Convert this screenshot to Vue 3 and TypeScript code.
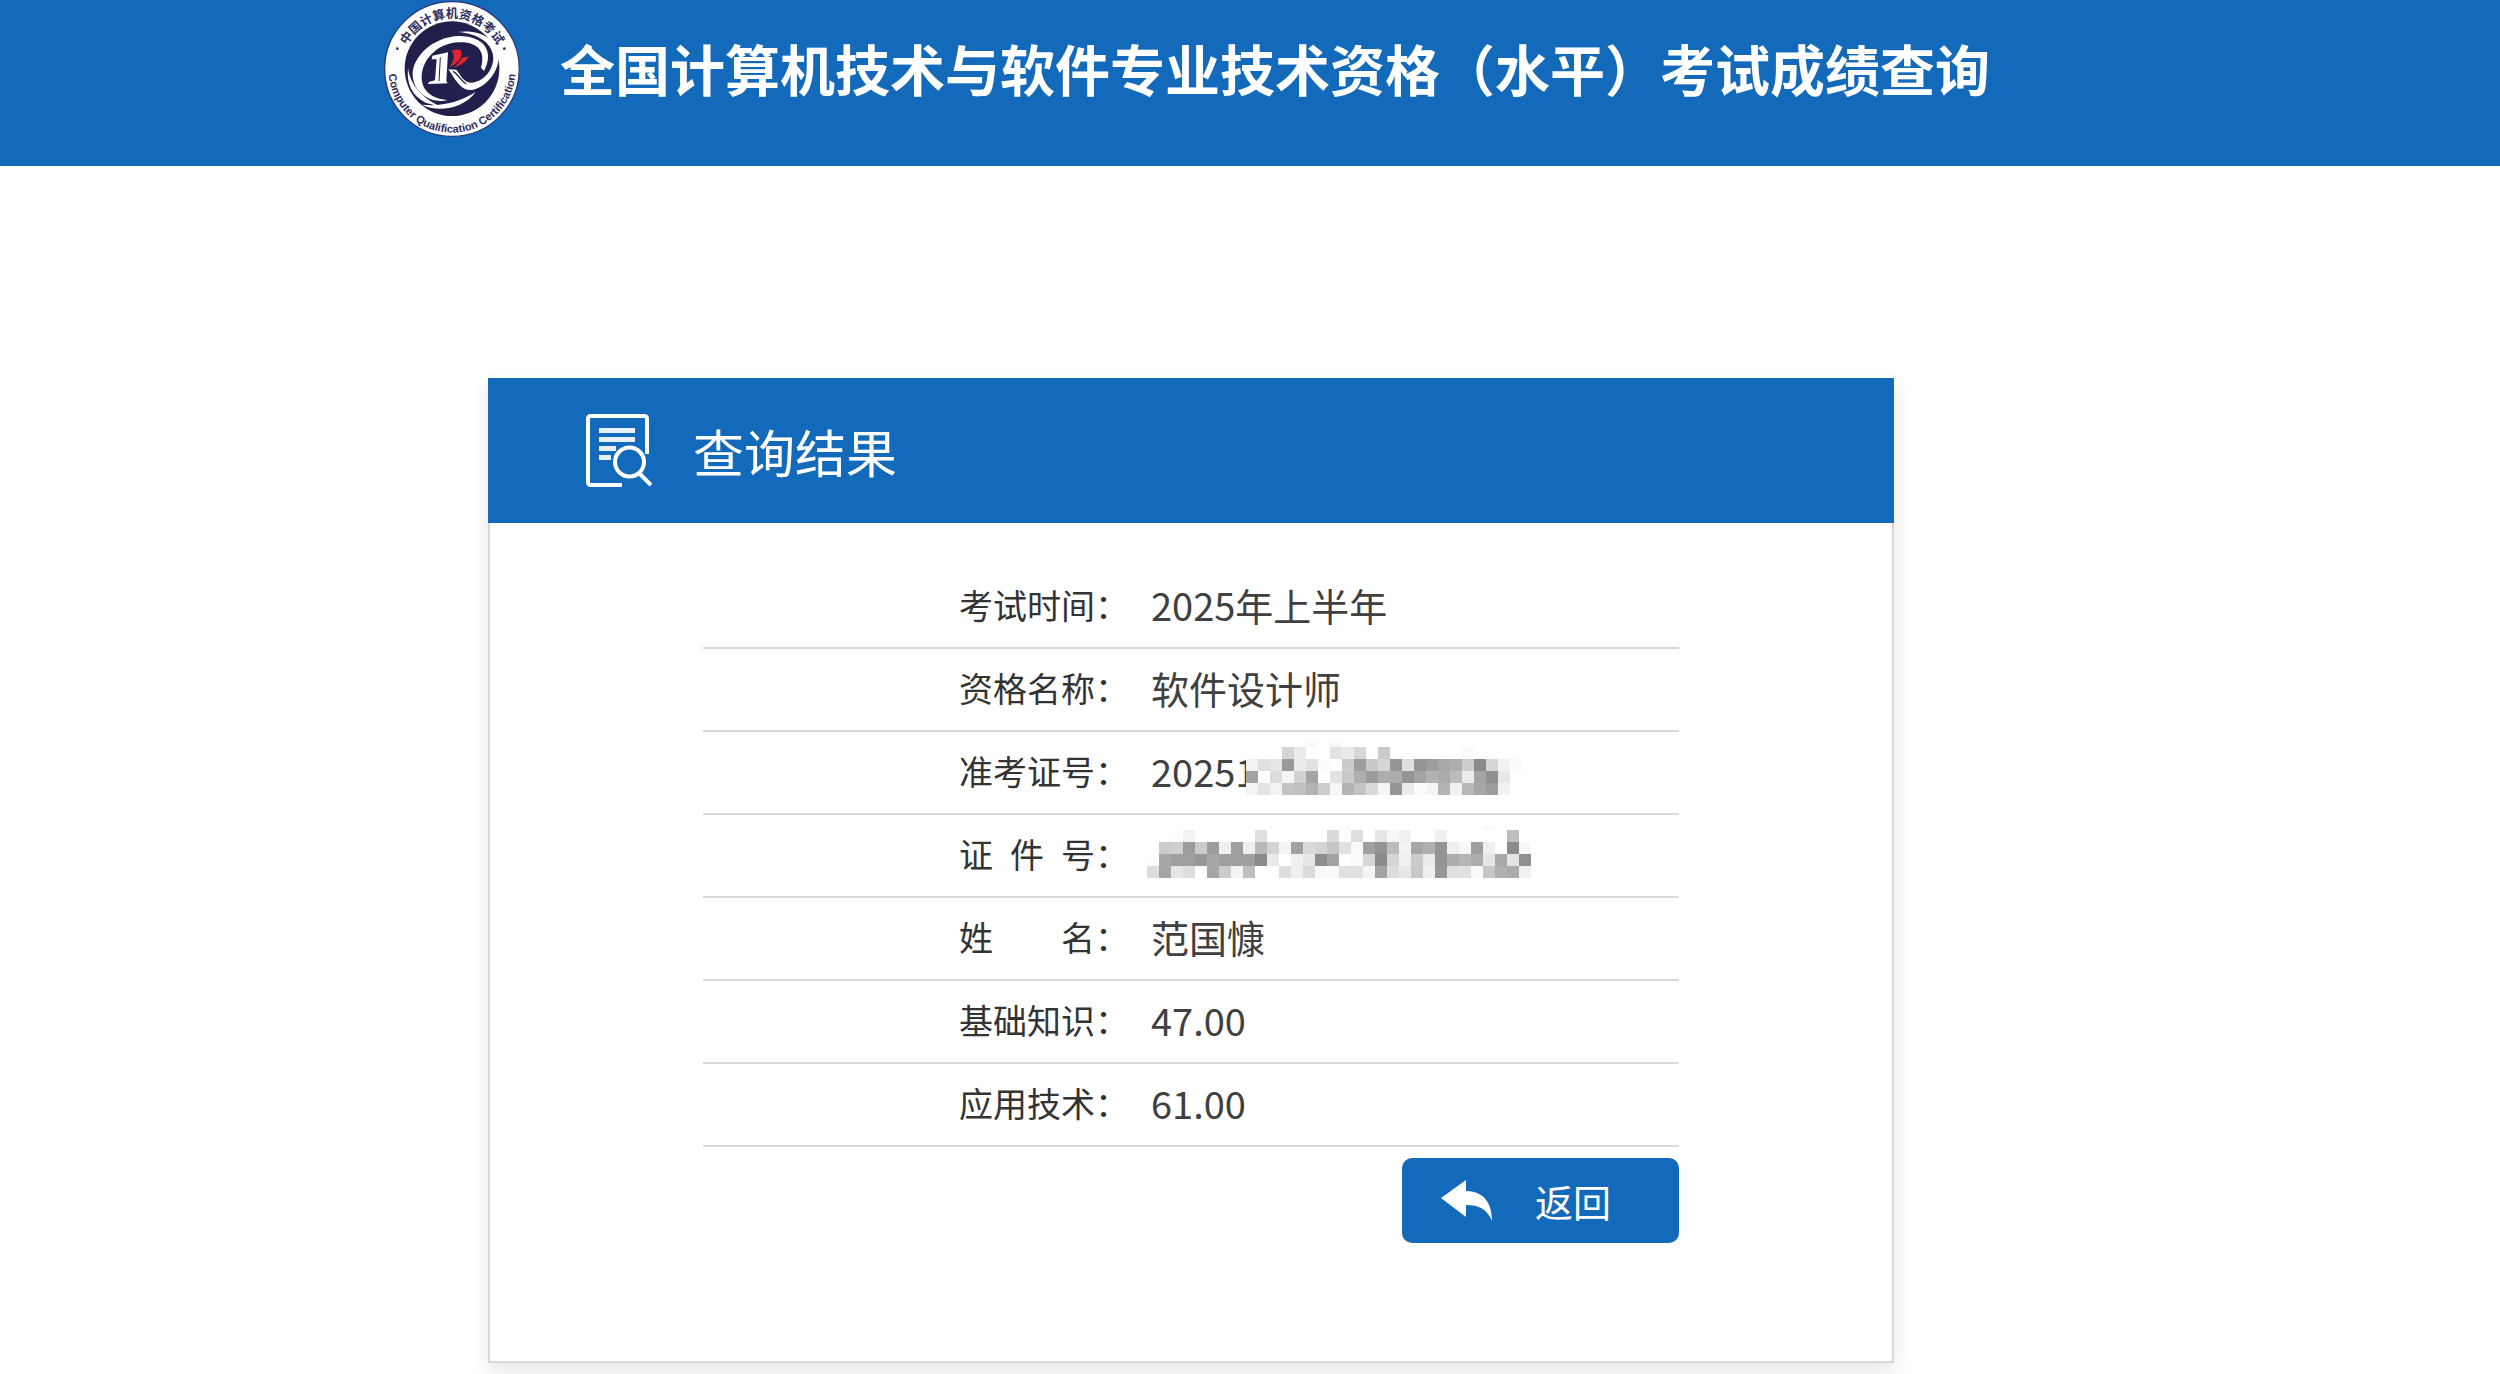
<script setup lang="ts">
interface Mosaic {
  cap: string
  rows: string[]
}

interface ResultRow {
  label: string
  value: string
  mosaic?: Mosaic
}

interface Cell {
  x: number
  y: number
  h: number
  fill: string
}

const CELL = 12
const CAP = 4

// Each row is a run of two-digit grey levels; ".." leaves a cell empty.
const admissionMosaic: Mosaic = {
  cap: '.. .. .. .. .. f7 .. f7',
  rows: [
    '.. .. .. d5 ea .. .. e2 ea d8 .. cb .. .. .. .. .. .. fa .. .. .. ..',
    'f2 e0 e6 99 ea e2 fc ff cb 9d c9 d5 95 e0 95 9e a8 ae cd 8a d5 f2 fa',
    'a3 ff dc f5 d2 a4 ff e2 c8 ae 9b ad ac 94 a4 b3 ac bb eb a4 90 e8 ff',
    'f4 e4 f2 c4 c0 b3 cd f7 b3 c4 da f5 96 eb fc f5 b3 f2 b8 a6 9c f2 ..',
  ],
}

const identityMosaic: Mosaic = {
  cap: '.. .. .. .. .. .. .. .. .. .. .. .. .. .. .. .. fa .. .. .. .. .. .. .. .. .. .. .. fa',
  rows: [
    '.. .. fd f2 .. .. .. .. .. e0 .. .. .. .. .. da fe de .. e6 f8 f0 .. .. f0 .. .. .. .. .. be ..',
    'ff cb d0 9c cb 9c f0 9e ef b9 d4 f5 a1 da d4 c6 e0 fa a0 93 bc f3 a6 b0 94 ef f7 9f ef ff 8c f8',
    'fd a7 9f 9f 98 a6 9f 9f 9f 8a ea ff f0 e7 8e a3 fd fb d7 8a d5 f1 cb ea 94 ac b6 ac e6 a8 e4 91',
    'de a6 e6 de fe a6 cb f4 bf ff fe dd f0 db f9 fa e1 e2 f5 a3 dd e7 c8 f0 96 e0 e0 fa c6 b0 ab f1',
  ],
}

const rows: ResultRow[] = [
  { label: '考试时间', value: '2025年上半年' },
  { label: '资格名称', value: '软件设计师' },
  { label: '准考证号', value: '20251', mosaic: admissionMosaic },
  { label: '证件号', value: '', mosaic: identityMosaic },
  { label: '姓名', value: '范国慷' },
  { label: '基础知识', value: '47.00' },
  { label: '应用技术', value: '61.00' },
]

function toCells(line: string, y: number, h: number): Cell[] {
  return line
    .split(' ')
    .map((level, i) => ({ x: i * CELL, y, h, fill: `#${level.repeat(3)}`, empty: level === '..' }))
    .filter((cell) => !cell.empty)
}

function cellsOf(mosaic: Mosaic): Cell[] {
  return [
    ...toCells(mosaic.cap, 0, CAP),
    ...mosaic.rows.flatMap((line, i) => toCells(line, CAP + i * CELL, CELL)),
  ]
}

function widthOf(mosaic: Mosaic): number {
  return mosaic.rows[0].split(' ').length * CELL
}
</script>

<template>
  <div class="page">
    <header class="banner">
      <div class="banner-inner">
        <svg class="logo" viewBox="45 5 408 408" aria-hidden="true">
          <defs>
            <path id="arc-top" d="M96 209 A153 153 0 0 1 402 209" />
            <path id="arc-bottom" d="M62 170 A191 191 0 1 0 436 170" />
          </defs>
          <circle cx="249" cy="209" r="202" fill="#fff" stroke="#2a3a78" stroke-width="4" />
          <circle cx="249" cy="208" r="142" fill="#211f4b" />
          <g fill="#fff">
            <path d="M345 215C375 160 350 110 270 110C190 112 128 175 131 230C136 285 190 314 237 302C190 298 157 275 158 232C160 180 205 131 270 129C330 127 350 160 336 205Z" />
            <path d="M266 98C330 88 390 120 389 175C388 225 340 273 300 272C272 270 256 236 238 210L262 211C276 228 282 248 306 250C342 248 372 215 373 175C372 135 330 102 266 98Z" />
            <path d="M158 316C205 340 282 330 320 278C270 310 215 322 158 316Z" />
            <path d="M117 206C112 250 128 290 170 310L220 324C165 300 125 262 117 206Z" />
            <path d="M190 169L237 159L232 246L236 252L176 254L181 247L198 243L203 180L188 180Z" />
          </g>
          <path d="M214 174L210 246" stroke="#211f4b" stroke-width="3" />
          <path d="M252 216C268 224 276 246 292 254" stroke="#211f4b" stroke-width="4" fill="none" />
          <g fill="#e0252f">
            <path d="M247 154Q272 146 278 158Q279 187 242 203Q264 172 247 154Z" />
            <path d="M277 176L299 171Q287 197 254 204Q272 191 277 176Z" />
          </g>
          <g fill="#2f2d5c">
            <circle cx="85" cy="148" r="4" />
            <circle cx="406" cy="148" r="4" />
            <text class="seal-cn" text-anchor="middle">
              <textPath href="#arc-top" startOffset="50%">中国计算机资格考试</textPath>
            </text>
            <text class="seal-en" text-anchor="middle">
              <textPath href="#arc-bottom" startOffset="50%">Computer Qualification Certification</textPath>
            </text>
          </g>
        </svg>
        <h1 class="title">全国计算机技术与软件专业技术资格（水平）考试成绩查询</h1>
      </div>
    </header>

    <main class="content">
      <section class="card">
        <div class="card-head">
          <svg class="head-icon" viewBox="0 0 66 73" fill="none" stroke="#fff" stroke-width="4" aria-hidden="true">
            <path d="M61 40V5Q61 2 58 2H5Q2 2 2 5V68Q2 71 5 71H36" />
            <path d="M13 16.500H49M13 25.500H49M13 34.500H30M13 43.500H25" stroke-width="5" stroke-opacity="0.900" />
            <circle cx="43.500" cy="48" r="14.500" />
            <path d="M53 59L65 71" />
          </svg>
          <h2 class="card-title">查询结果</h2>
        </div>

        <div class="card-body">
          <table class="result">
            <tbody>
              <tr v-for="row in rows" :key="row.label">
                <th scope="row"><span class="label">{{ row.label }}</span>：</th>
                <td>
                  <div class="value">
                    <span v-if="row.value">{{ row.value }}</span>
                    <svg
                      v-if="row.mosaic"
                      class="mosaic"
                      :class="{ overlap: row.value }"
                      :width="widthOf(row.mosaic)"
                      height="52"
                      shape-rendering="crispEdges"
                      aria-hidden="true"
                    >
                      <rect
                        v-for="(cell, i) in cellsOf(row.mosaic)"
                        :key="i"
                        :x="cell.x"
                        :y="cell.y"
                        width="12"
                        :height="cell.h"
                        :fill="cell.fill"
                      />
                    </svg>
                  </div>
                </td>
              </tr>
            </tbody>
          </table>

          <div class="actions">
            <button type="button" class="back">
              <svg class="back-icon" viewBox="0 0 52 41" aria-hidden="true">
                <path d="M0 18L25 0V11C42 11 51 22 51 41C46 29 38 25 25 25V37Z" fill="#fff" />
              </svg>
              <span>返回</span>
            </button>
          </div>
        </div>
      </section>
    </main>
  </div>
</template>

<style>
body {
  margin: 0;
  background: #fff;
}
</style>

<style scoped>
.page {
  font-family: "Noto Sans CJK SC", "Noto Sans", sans-serif;
  color: #333;
}

.banner {
  box-sizing: border-box;
  padding: 1px 118px 29px 0;
  background: #1369ba;
}

.banner-inner {
  display: flex;
  align-items: center;
  gap: 40px;
  max-width: 1614px;
  margin: 0 auto;
}

.logo {
  flex: none;
  width: 136px;
  height: 136px;
}

.seal-cn {
  font: 700 37px "Noto Sans CJK SC", sans-serif;
}

.seal-en {
  font: 700 33px "Liberation Sans", sans-serif;
}

.title {
  margin: 0;
  padding-bottom: 4px;
  color: #fff;
  font-size: 55px;
  font-weight: 700;
  line-height: 80px;
  white-space: nowrap;
}

.content {
  padding: 212px 118px 11px 0;
}

.card {
  box-sizing: border-box;
  max-width: 1406px;
  margin: 0 auto;
  background: #fff;
  box-shadow: 0 8px 20px rgba(0, 0, 0, 0.1);
}

.card-head {
  display: flex;
  align-items: center;
  gap: 41px;
  height: 145px;
  padding: 0 98px;
  background: #1369ba;
}

.head-icon {
  width: 66px;
  height: 73px;
}

.card-title {
  margin: 0;
  color: #fff;
  font-size: 51px;
  font-weight: 400;
  line-height: 72px;
}

.card-body {
  padding: 43px 213px 118px;
  border: 2px solid #d9d9d9;
  border-top: 0;
}

.result {
  width: 100%;
  border-collapse: separate;
  border-spacing: 0;
  table-layout: fixed;
}

.result th,
.result td {
  box-sizing: border-box;
  height: 83px;
  padding: 0 0 3px;
  border-bottom: 2px solid #d9d9d9;
  vertical-align: middle;
}

.result th {
  width: 448px;
  padding-right: 22px;
  font-size: 34px;
  font-weight: 400;
  line-height: 48px;
  text-align: right;
  white-space: nowrap;
}

.label {
  display: inline-block;
  width: 4em;
  text-align: justify;
  text-align-last: justify;
}

.value {
  display: flex;
  align-items: center;
  color: #404040;
  font-size: 38px;
  line-height: 56px;
}

.mosaic {
  flex: none;
  margin: 0 0 4px -4px;
}

.mosaic.overlap {
  margin-left: -10px;
}

.actions {
  display: flex;
  justify-content: flex-end;
  padding-top: 11px;
}

.back {
  display: flex;
  align-items: center;
  gap: 42px;
  width: 277px;
  height: 85px;
  padding: 0 0 0 39px;
  border: 0;
  border-radius: 10px;
  background: #1369ba;
  color: #fff;
  font-family: inherit;
  font-size: 38px;
  line-height: 56px;
  cursor: pointer;
}

.back-icon {
  width: 52px;
  height: 41px;
}
</style>
